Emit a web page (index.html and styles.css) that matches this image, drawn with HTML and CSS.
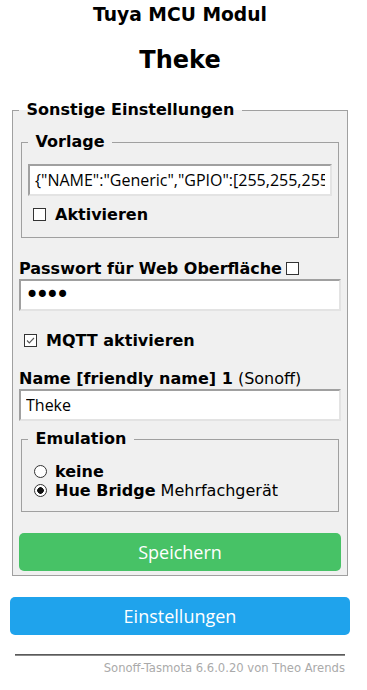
FILE: index.html
```html
<!DOCTYPE html>
<html lang="de">
<head>
    <meta charset="utf-8">
    <meta name="viewport" content="width=device-width, initial-scale=1">
    <link rel="stylesheet" href="styles.css">
</head>

<body>
    <div class="page">
        <div class="head">
            <h3>Tuya MCU Modul</h3>
            <h2>Theke</h2>
        </div>

        <fieldset class="box">
            <legend>&nbsp;Sonstige Einstellungen&nbsp;</legend>
            <form method="get" action="co">
                <fieldset class="sub tpl">
                    <legend>&nbsp;Vorlage&nbsp;</legend>
                    <input class="txt" id="t1" name="t1" placeholder="Vorlage" value='{"NAME":"Generic","GPIO":[255,255,255,255,255,255,255,255,255,255,255,255,255],"FLAG":15,"BASE":18}'>
                    <label class="row act"><input type="checkbox" id="t2" name="t2"><b>Aktivieren</b></label>
                </fieldset>

                <div class="lbl pw"><b>Passwort für Web Oberfläche</b><input type="checkbox" class="show"></div>
                <input class="txt pwd" id="wp" name="wp" type="password" placeholder="Passwort für Web Oberfläche" value="****">

                <label class="row mqtt"><input type="checkbox" id="b1" name="b1" checked><b>MQTT aktivieren</b></label>

                <div class="lbl fn"><b>Name [friendly name] 1</b> (Sonoff)</div>
                <input class="txt" id="a0" name="a0" placeholder="Sonoff" value="Theke">

                <fieldset class="sub emu">
                    <legend>&nbsp;Emulation&nbsp;</legend>
                    <label class="row first"><input type="radio" name="b2" value="0"><b>keine</b></label>
                    <label class="row"><input type="radio" name="b2" value="2" checked><b>Hue Bridge</b> Mehrfachgerät</label>
                </fieldset>

                <button name="save" type="submit" class="btn bgrn">Speichern</button>
            </form>
        </fieldset>

        <form action="cn" method="get" class="nav">
            <button class="btn">Einstellungen</button>
        </form>

        <div class="foot">
            <hr>
            <a href="#">Sonoff-Tasmota 6.6.0.20 von Theo Arends</a>
        </div>
    </div>
</body>
</html>
```

FILE: styles.css
```css
body {
    margin: 0;
    background: #fff;
    color: #000;
    font-family: "DejaVu Sans", Verdana, sans-serif;
    font-size: 16px;
}

.page {
    width: 340px;
    margin-left: 10px;
}

.head { text-align: center; }
.head h3 { margin: 4px 0 0; font-size: 18.72px; line-height: 22px; }
.head h2 { margin: 20px 0 0; font-size: 24px; line-height: 28px; }

fieldset {
    margin: 0 2px;
    padding: 0 6px 5px;
    border: 1px solid #a0a0a0;
    background: #f0f0f0;
    min-width: 0;
}

legend {
    padding: 0 2px;
    font-weight: bold;
    line-height: 20px;
}

.box { margin-top: 26px; padding-bottom: 4px; }

.sub { margin-top: 12px; }
.tpl { padding-bottom: 12px; }
.emu { margin-top: 8px; padding-bottom: 11px; }

.txt {
    display: block;
    width: 100%;
    height: 32px;
    box-sizing: border-box;
    margin: 0;
    padding: 0 5px;
    border: 2px solid;
    border-color: #a0a0a0 #e3e3e3 #e3e3e3 #a0a0a0;
    background: #fff;
    color: #000;
    font-family: "Open Sans", sans-serif;
    font-size: 16px;
}
.tpl .txt { margin-top: 12px; }
.pwd {
    font-family: "DejaVu Sans", sans-serif;
    font-size: 24px;
    letter-spacing: -4px;
    padding-left: 4px;
}

.row {
    display: block;
    line-height: 20px;
}
.act { margin-top: 9px; }
.mqtt { margin-top: 20px; }
.emu .row { line-height: 19px; }
.emu .first { margin-top: 13px; }

.lbl { line-height: 20px; }
.pw { margin-top: 21px; }
.fn { margin-top: 18px; }

input[type=checkbox], input[type=radio] {
    -webkit-appearance: none;
    appearance: none;
    width: 13px;
    height: 13px;
    box-sizing: border-box;
    margin: 0 9px 0 5px;
    border: 1px solid #333;
    background: #fff;
    vertical-align: -1px;
}
input[type=checkbox]:checked {
    background: #fff url("data:image/svg+xml,%3Csvg xmlns='http://www.w3.org/2000/svg' viewBox='0 0 11 11'%3E%3Cpath d='M2 5.5l2.3 2.4L9 3' fill='none' stroke='%23555' stroke-width='1.1'/%3E%3C/svg%3E") center / 11px no-repeat;
}
input[type=radio] { border-radius: 50%; margin-left: 6px; margin-right: 8px; }
input[type=radio]:checked {
    background: radial-gradient(circle, #111 0 3px, #fff 3.6px);
}
input.show { margin: 0 0 0 4px; }

.btn {
    display: block;
    width: 100%;
    height: 38px;
    border: 0;
    border-radius: 5px;
    background-color: #1fa3ec;
    color: #fff;
    font-family: "Open Sans", sans-serif;
    font-size: 18px;
    cursor: pointer;
}
.bgrn { background-color: #47c266; margin-top: 21px; }

.nav { margin: 21px 0 0; }

.foot {
    margin-top: 19px;
    padding: 0 5px;
    text-align: right;
    font-size: 11.6px;
}
.foot hr {
    margin: 0 0 5px;
    border: 0;
    border-top: 1px solid #5a5a5a;
    border-bottom: 1px solid #8a8a8a;
}
.foot a { color: #aaa; text-decoration: none; }
```
